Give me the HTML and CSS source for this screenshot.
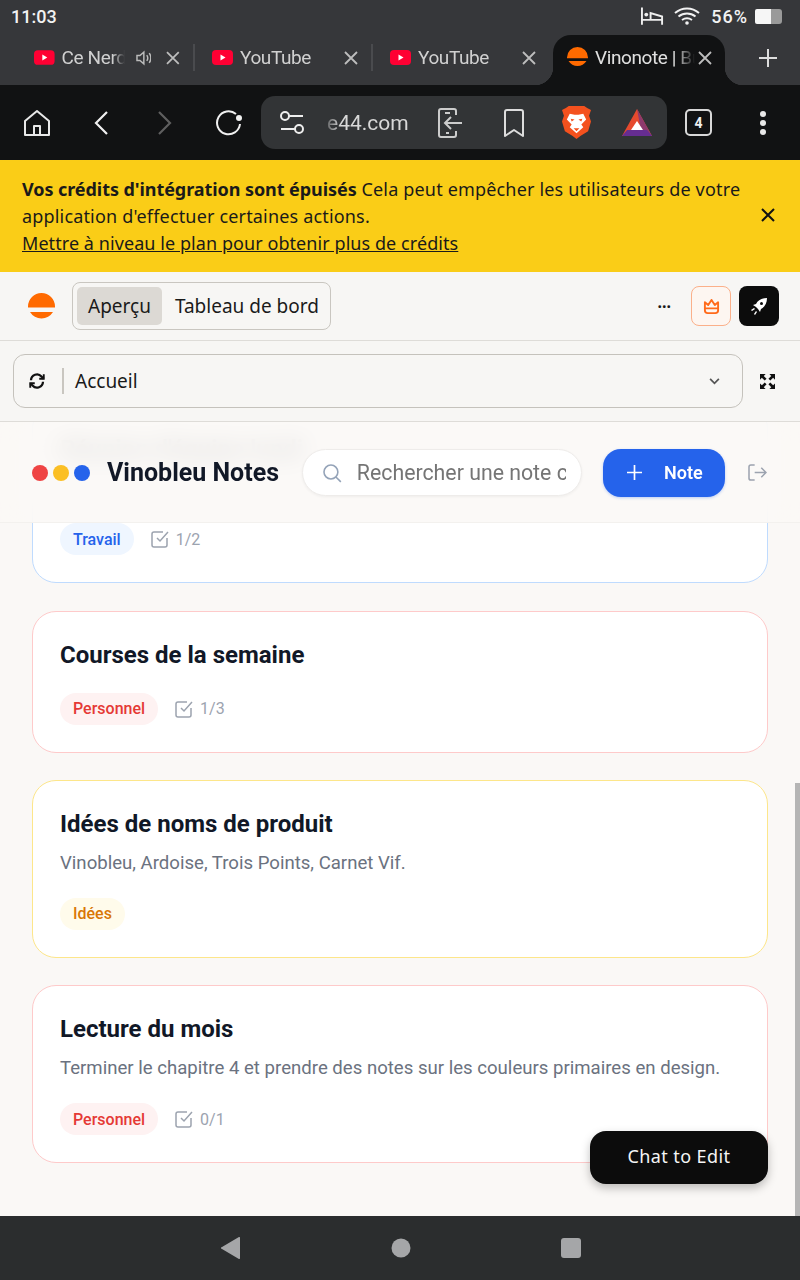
FILE: index.html
```html
<!DOCTYPE html>
<html>
<head>
    <meta charset="utf-8">
    <title>Vinonote</title>
    <link rel="stylesheet" href="styles.css">
</head>
<body>
    <div class="screen">
        <div class="status-bar">
            <span class="time">11:03</span>
            <div class="status-icons">
                <svg class="bed" viewBox="0 0 24 18" width="23" height="18" fill="none" stroke="#eee" stroke-width="2"><path d="M1 0v18M1 13h21M22 18V9.500L10 6v7"/><circle cx="5.500" cy="7.500" r="2" fill="#eee" stroke="none"/></svg>
                <svg class="wifi" viewBox="0 0 26 18" width="26" height="18" fill="none" stroke="#f2f2f2" stroke-width="2"><path d="M1 6c7-6 17-6 24 0M4.500 9.500c5-4 12-4 17 0M8 13c3-2 7-2 10 0"/><circle cx="13" cy="16" r="1.800" fill="#f2f2f2" stroke="none"/></svg>
                <span class="percent">56%</span>
                <div class="battery"><div class="battery-level"></div><div class="battery-rest"></div></div>
            </div>
        </div>

        <div class="tabs">
            <div class="tab sep">
                <svg class="yt" viewBox="0 0 21 15" width="21" height="15"><rect width="21" height="15" rx="4" fill="#ff0033"/><path d="M8.500 4.500l5 3-5 3z" fill="#fff"/></svg>
                <span class="tab-title">Ce Nerd</span>
                <svg class="speaker" viewBox="0 0 16 16" width="16" height="16" fill="none" stroke="#bbb" stroke-width="1.500"><path d="M1 5.500h3L8 2v12L4 10.500H1zM11 5c1.200 1.800 1.200 4.200 0 6M13.500 3c2 3 2 7 0 10"/></svg>
                <svg class="close" viewBox="0 0 14 14" width="14" height="14" stroke="#bdbdbd" stroke-width="1.800"><path d="M1 1l12 12M13 1L1 13"/></svg>
            </div>
            <div class="tab sep">
                <svg class="yt" viewBox="0 0 21 15" width="21" height="15"><rect width="21" height="15" rx="4" fill="#ff0033"/><path d="M8.500 4.500l5 3-5 3z" fill="#fff"/></svg>
                <span class="tab-title">YouTube</span>
                <svg class="close" viewBox="0 0 14 14" width="14" height="14" stroke="#bdbdbd" stroke-width="1.800"><path d="M1 1l12 12M13 1L1 13"/></svg>
            </div>
            <div class="tab">
                <svg class="yt" viewBox="0 0 21 15" width="21" height="15"><rect width="21" height="15" rx="4" fill="#ff0033"/><path d="M8.500 4.500l5 3-5 3z" fill="#fff"/></svg>
                <span class="tab-title">YouTube</span>
                <svg class="close" viewBox="0 0 14 14" width="14" height="14" stroke="#bdbdbd" stroke-width="1.800"><path d="M1 1l12 12M13 1L1 13"/></svg>
            </div>
            <div class="tab active">
                <svg viewBox="0 0 27 27" width="21" height="21"><path d="M0 13.500a13.500 13.500 0 0 1 27 0v1H0zM2 18h23a13.500 13.500 0 0 1-23 0z" fill="#ff6a00"/></svg>
                <span class="tab-title">Vinonote | Bu</span>
                <svg class="close" viewBox="0 0 14 14" width="14" height="14" stroke="#bdbdbd" stroke-width="1.800"><path d="M1 1l12 12M13 1L1 13"/></svg>
            </div>
            <svg class="new-tab" viewBox="0 0 18 18" width="18" height="18" stroke="#ddd" stroke-width="2"><path d="M9 0v18M0 9h18"/></svg>
        </div>

        <div class="toolbar">
            <div class="tool">
                <svg viewBox="0 0 28 28" width="28" height="28" fill="none" stroke="#e8e8e8" stroke-width="2" stroke-linejoin="round"><path d="M2 12L14 2l12 10v14H2zM11 26v-9h6v9"/></svg>
            </div>
            <div class="tool">
                <svg viewBox="0 0 16 26" width="16" height="26" fill="none" stroke="#f0f0f0" stroke-width="2.200"><path d="M14 2L3 13l11 11"/></svg>
            </div>
            <div class="tool">
                <svg viewBox="0 0 16 26" width="16" height="26" fill="none" stroke="#5f5f5f" stroke-width="2.200"><path d="M2 2l11 11L2 24"/></svg>
            </div>
            <div class="tool">
                <svg viewBox="0 0 28 28" width="28" height="28" fill="none" stroke="#f0f0f0" stroke-width="2"><path d="M25 15a11.500 11.500 0 1 1-4-10"/><circle cx="24" cy="9" r="3" fill="#f0f0f0" stroke="none"/></svg>
            </div>
            <div class="url-bar">
                <svg class="tune" viewBox="0 0 26 24" width="26" height="24" fill="none" stroke="#eee" stroke-width="2"><circle cx="6" cy="5" r="4"/><path d="M10 5h14M2 18h14"/><circle cx="20" cy="18" r="4"/></svg>
                <span class="url-text">e44.com</span>
                <svg class="url-phone" viewBox="0 0 26 30" width="26" height="30" fill="none" stroke="#ccc" stroke-width="2"><path d="M19 7V3a2 2 0 0 0-2-2H4a2 2 0 0 0-2 2v24a2 2 0 0 0 2 2h13a2 2 0 0 0 2-2v-4M25 15H9M14 9l-6 6 6 6M8 5h5M9 25h3"/></svg>
                <svg class="url-mark" viewBox="0 0 20 28" width="20" height="28" fill="none" stroke="#ddd" stroke-width="2" stroke-linejoin="round"><path d="M1 3a2 2 0 0 1 2-2h14a2 2 0 0 1 2 2v24l-9-6-9 6z"/></svg>
                <svg class="url-brave" viewBox="0 0 30 34" width="29" height="33"><path d="M7 0h16l3 2 4 2-2 6 2 6-3 10-8 5-4 3-4-3-8-5L0 16l2-6-2-6 4-2z" fill="#f4511e"/><path d="M8 8l5 1h4l5-1 3 6-5 5 2 3-7 6-7-6 2-3-5-5z" fill="#fff"/><path d="M9 13l4 1-3 2zM21 13l-4 1 3 2zM12 23h6l-3 3z" fill="#f4511e"/></svg>
                <svg class="url-bat" viewBox="0 0 30 27" width="30" height="27"><path d="M15 0l15 27H0z" fill="#e64a2e"/><path d="M15 0l15 27H20z" fill="#8e3a6d"/><path d="M0 27l5-6h20l5 6z" fill="#662d91"/><path d="M15 12l6 9H9z" fill="#fff"/></svg>
            </div>
            <div class="tab-count">4</div>
            <div class="menu-dots"><i></i><i></i><i></i></div>
        </div>

        <div class="banner">
            <p class="banner-text"><b>Vos crédits d'intégration sont épuisés</b> Cela peut empêcher les utilisateurs de votre application d'effectuer certaines actions.<br><a href="#">Mettre à niveau le plan pour obtenir plus de crédits</a></p>
            <svg class="banner-close" viewBox="0 0 14 14" width="14" height="14" stroke="#111" stroke-width="2"><path d="M1 1l12 12M13 1L1 13"/></svg>
        </div>

        <div class="builder-bar">
            <svg class="builder-logo" viewBox="0 0 27 27" width="27" height="27"><path d="M0 13.500a13.500 13.500 0 0 1 27 0v1H0zM2 19h23a13.500 13.500 0 0 1-23 0z" fill="#ff6a00"/></svg>
            <div class="segment">
                <span class="seg-item on">Aperçu</span>
                <span class="seg-item">Tableau de bord</span>
            </div>
            <span class="more">···</span>
            <div class="square-btn crown">
                <svg viewBox="0 0 18 18" width="17" height="17" fill="none" stroke="#ff6a1a" stroke-width="2" stroke-linejoin="round"><path d="M2 4.500l3.500 3L9 2l3.500 5.500L16 4.500V13a3 3 0 0 1-3 3H5a3 3 0 0 1-3-3zM2 11h14"/></svg>
            </div>
            <div class="square-btn rocket">
                <svg viewBox="0 0 18 18" width="18" height="18" fill="#fff"><path d="M17 1c-5 0-9 2-11 6L3 8l3 2 2 2 2 3 1-3c4-2 6-6 6-11z"/><circle cx="11.500" cy="6.500" r="1.500" fill="#0c0c0c"/><path d="M1 13l3-2 1 1-3 2zM4 17l2-3 1 1-2 3z"/></svg>
            </div>
        </div>

        <div class="page-bar">
            <div class="page-select">
                <svg class="sync" viewBox="0 0 24 24" width="18" height="18" fill="none" stroke="#111" stroke-width="3"><path d="M4 11a8 8 0 0 1 14-5l3 3M20 13a8 8 0 0 1-14 5l-3-3"/><path d="M21 3v6h-6M3 21v-6h6" stroke-width="2.500"/></svg>
                <span class="page-name">Accueil</span>
                <svg class="chevron" viewBox="0 0 12 8" width="11" height="7" fill="none" stroke="#555" stroke-width="2"><path d="M1 1l5 5 5-5"/></svg>
            </div>
            <svg class="expand" viewBox="0 0 16 16" width="15" height="15" fill="#111"><path d="M0 0h6L4 2l3 3-2 2-3-3-2 2zM16 0v6l-2-2-3 3-2-2 3-3-2-2zM0 16v-6l2 2 3-3 2 2-3 3 2 2zM16 16h-6l2-2-3-3 2-2 3 3 2-2z"/></svg>
        </div>

        <div class="app">
            <div class="notes">
                <div class="note blue">
                    <h2 class="note-title">Réunion d'équipe lundi</h2>
                    <p class="note-desc">&nbsp;</p>
                    <div class="note-meta">
                        <span class="tag tag-blue">Travail</span>
                        <svg class="check" viewBox="0 0 18 18" width="18" height="18" fill="none" stroke="#9ca3af" stroke-width="1.500"><path d="M16 8v7a2 2 0 0 1-2 2H3a2 2 0 0 1-2-2V4a2 2 0 0 1 2-2h9M6 8l3 3 8-9"/></svg>
                        <span class="count">1/2</span>
                    </div>
                </div>
                <div class="note red">
                    <h2 class="note-title">Courses de la semaine</h2>
                    <div class="note-meta">
                        <span class="tag tag-red">Personnel</span>
                        <svg class="check" viewBox="0 0 18 18" width="18" height="18" fill="none" stroke="#9ca3af" stroke-width="1.500"><path d="M16 8v7a2 2 0 0 1-2 2H3a2 2 0 0 1-2-2V4a2 2 0 0 1 2-2h9M6 8l3 3 8-9"/></svg>
                        <span class="count">1/3</span>
                    </div>
                </div>
                <div class="note yellow">
                    <h2 class="note-title">Idées de noms de produit</h2>
                    <p class="note-desc">Vinobleu, Ardoise, Trois Points, Carnet Vif.</p>
                    <div class="note-meta">
                        <span class="tag tag-yellow">Idées</span>
                    </div>
                </div>
                <div class="note red">
                    <h2 class="note-title">Lecture du mois</h2>
                    <p class="note-desc">Terminer le chapitre 4 et prendre des notes sur les couleurs primaires en design.</p>
                    <div class="note-meta">
                        <span class="tag tag-red">Personnel</span>
                        <svg class="check" viewBox="0 0 18 18" width="18" height="18" fill="none" stroke="#9ca3af" stroke-width="1.500"><path d="M16 8v7a2 2 0 0 1-2 2H3a2 2 0 0 1-2-2V4a2 2 0 0 1 2-2h9M6 8l3 3 8-9"/></svg>
                        <span class="count">0/1</span>
                    </div>
                </div>
            </div>

            <div class="app-header">
                <div class="dots"><i class="dot-red"></i><i class="dot-yellow"></i><i class="dot-blue"></i></div>
                <span class="app-name">Vinobleu Notes</span>
                <div class="search">
                    <svg viewBox="0 0 20 20" width="20" height="20" fill="none" stroke="#94a3b8" stroke-width="1.600"><circle cx="9" cy="9" r="7"/><path d="M14 14l5 5"/></svg>
                    <span class="search-text">Rechercher une note c</span>
                </div>
                <div class="add-btn">
                    <svg viewBox="0 0 16 16" width="15" height="15" stroke="#fff" stroke-width="1.800"><path d="M8 0v16M0 8h16"/></svg>
                    <span>Note</span>
                </div>
                <svg class="logout" viewBox="0 0 20 18" width="19" height="17" fill="none" stroke="#9ca3af" stroke-width="1.600"><path d="M7 1H3a2 2 0 0 0-2 2v12a2 2 0 0 0 2 2h4M7 9h12M14 4l5 5-5 5"/></svg>
            </div>

            <div class="chat-btn">Chat to Edit</div>
            <div class="scroll-thumb"></div>
        </div>

        <div class="nav-bar">
            <svg viewBox="0 0 20 22" width="20" height="22" fill="#a5a6a8"><path d="M19 1v20a1 1 0 0 1-1.500.8L1 12a1 1 0 0 1 0-2L17.500.2A1 1 0 0 1 19 1z"/></svg>
            <svg viewBox="0 0 20 20" width="20" height="20" fill="#a5a6a8"><circle cx="10" cy="10" r="9.500"/></svg>
            <svg viewBox="0 0 20 20" width="20" height="20" fill="#a5a6a8"><rect width="20" height="20" rx="3"/></svg>
        </div>
    </div>
</body>
</html>
```

FILE: styles.css
```css
* {
    box-sizing: border-box;
}

body {
    margin: 0;
    font-family: Roboto, sans-serif;
}

.screen {
    width: 800px;
    height: 1280px;
    display: flex;
    flex-direction: column;
    overflow: hidden;
    background-color: #faf8f6;
}

/* android status bar */
.status-bar {
    height: 35px;
    background-color: #36373a;
    color: #f2f2f2;
    display: flex;
    align-items: center;
    justify-content: space-between;
    padding: 0 16px 3px 11px;
}

.time {
    font-size: 18px;
    font-weight: 500;
}

.status-icons {
    display: flex;
    align-items: center;
    gap: 10px;
}

.percent {
    font-size: 18px;
    font-weight: 500;
    letter-spacing: 1px;
    margin-left: 1px;
}

.battery {
    display: flex;
    height: 15px;
    width: 29px;
    margin-left: -3px;
}

.battery-level {
    width: 16px;
    background-color: #f6f6f6;
    border-radius: 2px 0 0 2px;
}

.battery-rest {
    flex: 1;
    background-color: #9a9a9a;
    border-radius: 0 3px 3px 0;
    margin-right: 2px;
}

/* browser tabs */
.tabs {
    height: 50px;
    background-color: #36373a;
    display: flex;
    align-items: stretch;
    padding-left: 17px;
}

.tab {
    width: 178px;
    display: flex;
    align-items: center;
    padding: 0 15px 5px 17px;
    color: #d0d0d0;
    position: relative;
    font-size: 19px;
    letter-spacing: -0.4px;
}

.tab.sep::after {
    content: "";
    position: absolute;
    right: 0;
    top: 9px;
    height: 27px;
    width: 2px;
    background-color: #4a4b4e;
}

.tab-title {
    flex: 1;
    margin-left: 7px;
    white-space: nowrap;
    overflow: hidden;
    -webkit-mask-image: linear-gradient(to right, #000 80%, transparent 100%);
    mask-image: linear-gradient(to right, #000 80%, transparent 100%);
}

.speaker {
    margin: 0 15px 0 0;
}

.tab:first-child .tab-title {
    flex: none;
    width: 63px;
    margin-right: 11px;
}

.tab.active {
    width: 172px;
    margin-left: 2px;
    background-color: #111213;
    border-radius: 18px 18px 0 0;
    padding: 0 13px 5px 14px;
    color: #e0e0e0;
}

.tab.active .tab-title {
    margin-right: 3px;
}

.tab.active::before,
.tab.active::after {
    content: "";
    position: absolute;
    bottom: 0;
    width: 18px;
    height: 18px;
}

.tab.active::before {
    left: -18px;
    background: radial-gradient(circle at 0 0, transparent 18px, #111213 18.5px);
}

.tab.active::after {
    right: -18px;
    background: radial-gradient(circle at 100% 0, transparent 18px, #111213 18.5px);
}

.new-tab {
    align-self: center;
    margin-left: 34px;
    margin-bottom: 5px;
}

/* browser toolbar */
.toolbar {
    height: 75px;
    background-color: #111213;
    display: flex;
    align-items: center;
    padding-left: 5px;
}

.tool {
    width: 64px;
    display: flex;
    justify-content: center;
}

.url-bar {
    width: 406px;
    height: 53px;
    background-color: #323436;
    border-radius: 14px;
    display: flex;
    align-items: center;
    color: #d8d8d8;
    font-size: 21px;
    padding-left: 18px;
}

.url-text {
    margin-left: 22px;
    width: 82px;
    -webkit-mask-image: linear-gradient(to right, rgba(0, 0, 0, 0.3) 0, #000 14px);
    mask-image: linear-gradient(to right, rgba(0, 0, 0, 0.3) 0, #000 14px);
}

.url-phone {
    margin-left: 28px;
}

.url-mark {
    margin-left: 41px;
}

.url-brave {
    margin-left: 38px;
}

.url-bat {
    margin-left: 31px;
}

.tab-count {
    width: 27px;
    height: 27px;
    margin-left: 18px;
    border: 2px solid #d8d8d8;
    border-radius: 5px;
    color: #eee;
    font-size: 14px;
    font-weight: 700;
    display: flex;
    align-items: center;
    justify-content: center;
}

.menu-dots {
    margin-left: 48px;
    display: flex;
    flex-direction: column;
    gap: 3px;
}

.menu-dots i {
    width: 6px;
    height: 6px;
    border-radius: 50%;
    background-color: #e8e8e8;
}

/* credits banner */
.banner {
    height: 112px;
    background-color: #facd17;
    padding: 16px 25px 0 22px;
    display: flex;
    align-items: flex-start;
    font-family: "Noto Sans", sans-serif;
    color: #1a1a1a;
}

.banner-text {
    margin: 0;
    flex: 1;
    font-size: 18px;
    line-height: 27px;
    padding-right: 8px;
    letter-spacing: 0.17px;
}

.banner-text b {
    font-weight: 700;
    letter-spacing: -0.07px;
}

.banner-text a {
    color: inherit;
    letter-spacing: 0.07px;
}

.banner-close {
    margin-top: 32px;
}

/* builder header */
.builder-bar {
    height: 69px;
    background-color: #f7f6f4;
    border-bottom: 1px solid #dedcd8;
    display: flex;
    align-items: center;
    padding: 0 21px 0 28px;
    font-family: "Noto Sans", sans-serif;
    color: #1a1a1a;
}

.segment {
    margin-left: 17px;
    height: 48px;
    width: 259px;
    border: 1px solid #c9c6c0;
    border-radius: 8px;
    padding: 4px;
    display: flex;
    align-items: stretch;
    font-size: 19px;
}

.seg-item {
    display: flex;
    align-items: center;
    padding: 0 11px;
    border-radius: 5px;
    white-space: nowrap;
}

.seg-item.on {
    background-color: #dcd9d4;
    margin-right: 2px;
}

.more {
    margin-left: auto;
    margin-right: 20px;
    font-weight: 700;
    font-size: 16px;
}

.square-btn {
    width: 40px;
    height: 40px;
    border-radius: 8px;
    display: flex;
    align-items: center;
    justify-content: center;
}

.crown {
    border: 1px solid #fbb08a;
    background-color: #fdf6f1;
}

.rocket {
    background-color: #0c0c0c;
    margin-left: 8px;
}

/* page selector */
.page-bar {
    height: 81px;
    background-color: #f7f6f4;
    border-bottom: 1px solid #dedcd8;
    display: flex;
    align-items: center;
    padding-left: 13px;
    font-family: "Noto Sans", sans-serif;
    color: #1a1a1a;
}

.page-select {
    width: 730px;
    height: 54px;
    border: 1px solid #c5c2bc;
    border-radius: 12px;
    display: flex;
    align-items: center;
    padding: 0 22px 0 14px;
    font-size: 19px;
}

.sync {
    margin-right: 16px;
}

.page-name {
    border-left: 2px solid #c9c6c0;
    padding-left: 11px;
    line-height: 26px;
}

.chevron {
    margin-left: auto;
}

.expand {
    margin-left: 17px;
}

/* notes app */
.app {
    flex: 1;
    position: relative;
    overflow: hidden;
}

.notes {
    height: 100%;
    display: flex;
    flex-direction: column;
    justify-content: flex-end;
    gap: 27.2px;
    padding: 0 32px 53px;
}

.note {
    flex: none;
    background-color: #fff;
    border: 1px solid #e5e7eb;
    border-radius: 24px;
    padding: 27px;
}

.note.blue {
    border-color: #bfdbfe;
}

.note.red {
    border-color: #fecaca;
}

.note.yellow {
    border-color: #fde68a;
}

.note-title {
    margin: 0;
    font-size: 24px;
    line-height: 32px;
    font-weight: 700;
    color: #111827;
}

.note-desc {
    margin: 10px 0 0;
    font-size: 18.6px;
    line-height: 26px;
    color: #6b7280;
}

.note-meta {
    margin-top: 22px;
    display: flex;
    align-items: center;
}

.tag {
    height: 32px;
    padding: 0 13px;
    border-radius: 16px;
    display: flex;
    align-items: center;
    font-size: 16px;
    font-weight: 500;
}

.tag-blue {
    background-color: #eff6ff;
    color: #2563eb;
}

.tag-red {
    background-color: #fef2f2;
    color: #e53935;
}

.tag-yellow {
    background-color: #fffbeb;
    color: #d97706;
}

.check {
    margin-left: 17px;
}

.count {
    margin-left: 7px;
    font-size: 16px;
    color: #9ca3af;
}

.app-header {
    position: absolute;
    top: 0;
    left: 0;
    right: 0;
    height: 101px;
    padding: 1px 32px 0;
    background-color: rgba(250, 248, 246, 0.88);
    backdrop-filter: blur(12px);
    border-bottom: 1px solid #f3f1ee;
    display: flex;
    align-items: center;
}

.dots {
    display: flex;
    gap: 5px;
}

.dots i {
    width: 16px;
    height: 16px;
    border-radius: 50%;
}

.dot-red {
    background-color: #ef4444;
}

.dot-yellow {
    background-color: #fbbf24;
}

.dot-blue {
    background-color: #2563eb;
}

.app-name {
    margin-left: 17px;
    font-size: 25px;
    font-weight: 700;
    color: #111827;
    white-space: nowrap;
}

.search {
    margin-left: 23px;
    width: 280px;
    height: 47px;
    background-color: #fff;
    border: 1px solid #eeecea;
    border-radius: 24px;
    box-shadow: 0 1px 3px rgba(0, 0, 0, 0.05);
    display: flex;
    align-items: center;
    padding: 0 15px 0 19px;
    flex: none;
}

.search-text {
    margin-left: 15px;
    font-size: 21.3px;
    color: #757575;
    white-space: nowrap;
    overflow: hidden;
}

.add-btn {
    margin-left: 21px;
    width: 122px;
    height: 48px;
    flex: none;
    background-color: #2563eb;
    border-radius: 18px;
    box-shadow: 0 1px 3px rgba(37, 99, 235, 0.3);
    color: #fff;
    font-size: 18px;
    font-weight: 600;
    display: flex;
    align-items: center;
    gap: 22px;
    padding-left: 24px;
}

.logout {
    margin-left: 23px;
    flex: none;
}

.chat-btn {
    position: absolute;
    right: 32px;
    bottom: 32px;
    width: 178px;
    height: 53px;
    padding-bottom: 3px;
    background-color: #0c0c0c;
    color: #f5f5f5;
    border-radius: 16px;
    box-shadow: 0 4px 10px rgba(0, 0, 0, 0.25);
    font-family: "Noto Sans", sans-serif;
    font-size: 18px;
    letter-spacing: 0.4px;
    display: flex;
    align-items: center;
    justify-content: center;
}

.scroll-thumb {
    position: absolute;
    right: 0;
    bottom: 0;
    width: 5px;
    height: 433px;
    background-color: #b5b5b5;
}

/* android nav */
.nav-bar {
    height: 64px;
    background-color: #2b2d2e;
    display: flex;
    align-items: center;
    justify-content: center;
    gap: 150px;
    padding-left: 2px;
}
```
